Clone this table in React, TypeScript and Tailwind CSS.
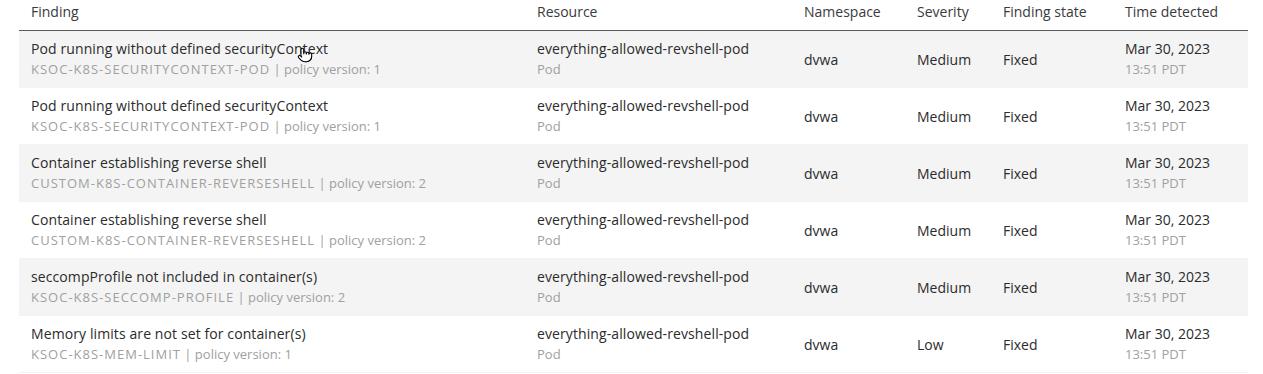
import React from 'react';
import { Pointer } from 'lucide-react';

interface Finding {
  title: string;
  policy: string;
  version: number;
  severity: string;
}

const findings: Finding[] = [
  { title: 'Pod running without defined securityContext', policy: 'KSOC-K8S-SECURITYCONTEXT-POD', version: 1, severity: 'Medium' },
  { title: 'Pod running without defined securityContext', policy: 'KSOC-K8S-SECURITYCONTEXT-POD', version: 1, severity: 'Medium' },
  { title: 'Container establishing reverse shell', policy: 'CUSTOM-K8S-CONTAINER-REVERSESHELL', version: 2, severity: 'Medium' },
  { title: 'Container establishing reverse shell', policy: 'CUSTOM-K8S-CONTAINER-REVERSESHELL', version: 2, severity: 'Medium' },
  { title: 'seccompProfile not included in container(s)', policy: 'KSOC-K8S-SECCOMP-PROFILE', version: 2, severity: 'Medium' },
  { title: 'Memory limits are not set for container(s)', policy: 'KSOC-K8S-MEM-LIMIT', version: 1, severity: 'Low' },
];

const cols = 'grid grid-cols-[506px_267px_113px_86px_122px_135px]';

const App: React.FC = () => {
  return (
    <div
      className="w-full h-[374px] bg-white overflow-hidden pl-[19px] text-[14px]"
      style={{ fontFamily: '"Open Sans", "Liberation Sans", sans-serif' }}
    >
      <div className="w-[1229px]">
        <div className={`${cols} h-[31px] items-center pb-[7px] border-b border-[#5a5a5a] text-[#3a3a3a]`}>
          <div className="pl-3">Finding</div>
          <div className="pl-3">Resource</div>
          <div className="pl-3">Namespace</div>
          <div className="pl-3">Severity</div>
          <div className="pl-3">Finding state</div>
          <div className="pl-3">Time detected</div>
        </div>

        {findings.map((f, i) => (
          <div
            key={i}
            className={`${cols} relative h-[57px] items-center border-b border-[#f2f2f2] ${i % 2 === 0 ? 'bg-[#f4f4f4]' : 'bg-white'}`}
          >
            <div className="pl-3 leading-5">
              <div className="text-[#2b2b2b] tracking-[0.1px]">{f.title}</div>
              <div className="text-[13px] text-[#a0a0a0]">
                <span className="tracking-[1px]">{f.policy}</span> | policy version: {f.version}
              </div>
            </div>
            <div className="pl-3 leading-5">
              <div className="text-[#2b2b2b] tracking-[0.1px]">everything-allowed-revshell-pod</div>
              <div className="text-[13px] text-[#a0a0a0]">Pod</div>
            </div>
            <div className="pl-3 text-[#2b2b2b]">dvwa</div>
            <div className="pl-3 text-[#2b2b2b]">{f.severity}</div>
            <div className="pl-3 text-[#2b2b2b]">Fixed</div>
            <div className="pl-3 leading-5">
              <div className="text-[#2b2b2b]">Mar 30, 2023</div>
              <div className="text-[13px] text-[#a0a0a0]">13:51 PDT</div>
            </div>
            {i === 0 && (
              <Pointer
                className="absolute left-[278px] top-[16px] w-[16px] h-[16px] text-black"
                fill="white"
                strokeWidth={1.6}
              />
            )}
          </div>
        ))}
      </div>
    </div>
  );
};

export default App;
